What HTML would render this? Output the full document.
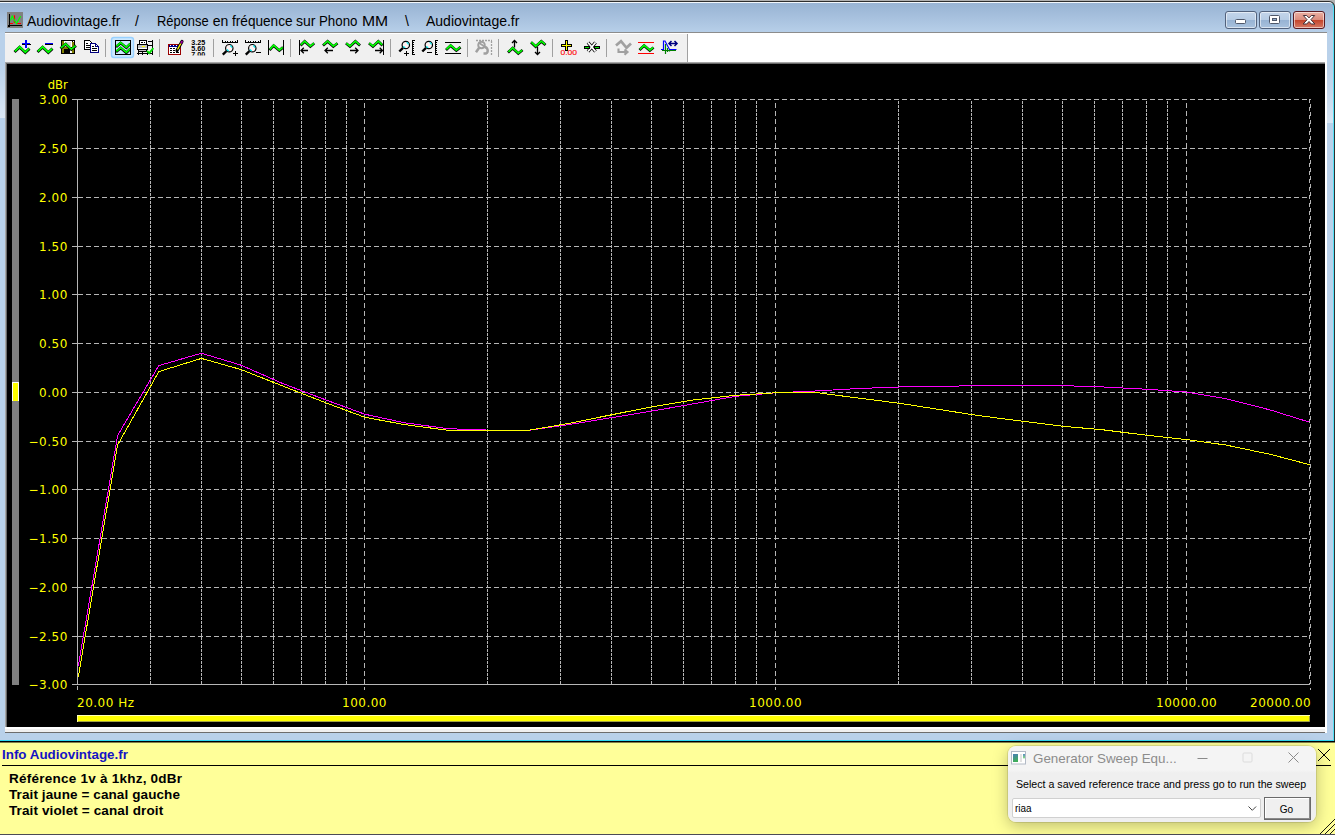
<!DOCTYPE html>
<html><head><meta charset="utf-8"><title>Audiovintage.fr</title>
<style>
html,body{margin:0;padding:0}
body{width:1335px;height:835px;overflow:hidden;position:relative;background:#fff;font-family:"Liberation Sans",sans-serif}
div,span,svg,i{position:absolute;box-sizing:border-box}
#frameout{left:0;top:0;width:1335px;height:742px;background:#b2b2b2}
#framedk{left:-8px;top:1px;width:1343px;height:741px;background:#2e2e2e;border-radius:6px 6px 0 0}
#frame{left:-8px;top:2px;width:1342px;height:739px;background:linear-gradient(#9ab5d5 0,#9cb7d6 4px,#adc6e2 20px,#b9d1ea 31px,#b9d1ea 100%);border-top:1px solid #f2f7fc;border-right:1px solid #52e0f6;border-bottom:1px solid #2fd8f2;border-radius:5px 5px 0 0}
#gl1{left:0;top:62px;width:5px;height:56px;background:linear-gradient(rgba(255,255,255,0) 0,rgba(255,255,255,.18) 40%,rgba(255,255,255,.5) 100%)}
#gl2{left:1327px;top:66px;width:6px;height:57px;background:linear-gradient(rgba(255,255,255,0) 0,rgba(255,255,255,.15) 40%,rgba(255,255,255,.45) 100%)}
#cap{left:0;top:0;width:1335px;height:32px}
#appicon{left:7px;top:12px}
.t{top:11px;font-size:14px;line-height:20px;color:#000;white-space:pre}
.cb{top:11px;width:32px;height:18px;border:1px solid #52627c;border-radius:3px;background:linear-gradient(#c3d5ea 0,#b7cce4 48%,#97b3d3 52%,#a9c2de 100%);box-shadow:inset 0 0 0 1px rgba(255,255,255,.55)}
.cb.red{border-color:#5a1a22;background:linear-gradient(#eab0a4 0,#dc8c7c 48%,#c4452c 52%,#d67a66 100%)}
.cb svg{left:0;top:0}
#client{left:5px;top:32px;width:1322px;height:701px;background:#fff;border-top:1px solid #8c8c8c}
#toolbar{left:5px;top:34px}
#e1{left:5px;top:62px;width:1320px;height:665px;background:#a6a6a6}
#e2{left:6px;top:63px;width:1319px;height:664px;background:#696969}
#strip{left:5px;top:727px;width:1320px;height:6px;background:#f0f0f0;border-top:2px solid #fff;border-bottom:1px solid #6d6d6d}
#plotbox{left:7px;top:64px;width:1318px;height:663px;background:#000;overflow:hidden}
.plot{left:0;top:0}
.yl,.xl{font-family:"DejaVu Sans","Liberation Sans",sans-serif;font-size:12px;line-height:14px;color:#ffff00;white-space:pre;letter-spacing:.5px}
.yl{left:0;width:60.800px;text-align:right;transform:translateY(-64px)}
.xl{top:632px;margin-left:-7px}
#info{left:0;top:741px;width:1335px;height:94px;background:#ffff99;border-top:1px solid #000;border-bottom:1px solid #4c4c55}
#info:before{content:"";position:absolute;left:0;top:0;width:1335px;height:1px;background:rgba(0,0,0,.5)}
.ih{left:2px;top:4.500px;font-weight:bold;font-size:13.400px;line-height:16px;color:#1414c4;white-space:pre}
.iline{left:2px;top:23px;width:1329px;height:1px;background:#000}
.it{left:9px;font-weight:bold;font-size:13.500px;line-height:16px;color:#000;white-space:pre;letter-spacing:.16px}
.ix{left:1317px;top:6px}
.iline2{left:1316px;top:23px;width:19px;height:1px;background:#000}
.grip{left:1315px;top:815px}
#dlg{left:1008px;top:746px;width:308px;height:76px;background:linear-gradient(#f4f4f4 0,#f4f4f4 24px,#efefef 27px,#efefef 100%);border-radius:8px;box-shadow:0 0 0 1px rgba(0,0,0,.10),0 4px 16px rgba(0,0,0,.26)}
.dicon{left:3px;top:5px}
.dt{left:25px;top:3px;font-size:13.400px;line-height:20px;color:#8c8c8c;white-space:pre}
.dbtn{top:6px}
.dmsg{left:8.300px;top:30.500px;font-size:11.600px;line-height:14px;color:#000;white-space:pre;transform:scaleX(.917);transform-origin:0 0}
.combo{left:4px;top:52px;width:249px;height:20px;background:#fff;border:1px solid #d0d0d0;border-radius:2px}
.combo span{left:1.700px;top:1.700px;font-size:11.800px;line-height:14px;color:#000;transform:scaleX(.84);transform-origin:0 0}
.combo svg{left:235px;top:7px}
.go{left:256px;top:51px;width:47px;height:23px;background:#f0f0f0;border:1px solid #6a6a6a;box-shadow:inset -1px -1px 0 #8a8a8a,inset 1px 1px 0 #fff;color:#000}
.go span{left:-1px;width:45px;top:3px;text-align:center;font-size:11.700px;line-height:16px;transform:scaleX(.86)}

</style></head>
<body>
<div id="frameout"></div><div id="framedk"></div><div id="frame"></div>
<div id="gl1"></div><div id="gl2"></div>
<div id="cap">
 <svg id="appicon" width="16" height="16" viewBox="0 0 16 16">
  <rect width="16" height="16" fill="#808080"/>
  <path d="M2.500 2v13M1 13.500h14M1 13l1.500 2" stroke="#000" fill="none" shape-rendering="crispEdges"/>
  <path d="M3 11.500h3M10 11.500h4" stroke="#f00" fill="none" shape-rendering="crispEdges"/>
  <path d="M7.400 3.300v7.500" stroke="#f00" stroke-width="1.300" fill="none"/>
  <path d="M3.300 8.600l1.900-4.300 2.200 3.800 2.100 3.400 4.100-7.200" stroke="#0f0" stroke-width="1.300" fill="none"/>
 </svg>
 <span class="t" style="left:27px">Audiovintage.fr</span>
 <span class="t" style="left:135px">/</span>
 <span class="t" style="left:156.800px;transform:scaleX(.922);transform-origin:0 0">Réponse</span><span class="t" style="left:212.800px">en</span><span class="t" style="left:231.600px;transform:scaleX(.972);transform-origin:0 0">fréquence</span><span class="t" style="left:296px">sur</span><span class="t" style="left:318.700px;transform:scaleX(.95);transform-origin:0 0">Phono</span><span class="t" style="left:362.200px;transform:scaleX(1.120);transform-origin:0 0">MM</span>
 <span class="t" style="left:405px">\</span>
 <span class="t" style="left:426px">Audiovintage.fr</span>
 <div class="cb" style="left:1225px"><svg width="30" height="16" viewBox="0 0 30 16"><rect x="9.500" y="7.500" width="10" height="4" rx="1" fill="#fff" stroke="#4f586a"/></svg></div>
 <div class="cb" style="left:1259px"><svg width="30" height="16" viewBox="0 0 30 16"><rect x="9.500" y="3.500" width="10" height="8" rx="1" fill="#fff" stroke="#4f586a"/><rect x="12.500" y="6.500" width="4" height="2" fill="#8ea8c8" stroke="#4f586a"/></svg></div>
 <div class="cb red" style="left:1293px"><svg width="30" height="16" viewBox="0 0 30 16"><path d="M9.300 3.500h3.400l2.300 2.400 2.300-2.400h3.400l-3.800 4.200 4 4.300h-3.600l-2.300-2.500-2.300 2.500h-3.600l4-4.300z" fill="#fff" stroke="#45323a" stroke-width="1"/></svg></div>
</div>
<div id="client"></div>
<svg id="toolbar" width="683" height="28" viewBox="5 34 683 28">
<rect x="5" y="34" width="683" height="28" fill="#f0f0f0"/><rect x="687" y="34" width="1" height="28" fill="#a0a0a0" shape-rendering="crispEdges"/>
<polyline points="14.52,51.99 19.62,47.15 25.32,52.55 29.48,48.61" fill="none" stroke="#000" stroke-width="2.8" stroke-linejoin="miter"/><polyline points="14.88,51.3 19.62,46.8 25.32,52.2 29.12,48.6" fill="none" stroke="#00ff00" stroke-width="1.8" stroke-linejoin="miter"/>
<path d="M22 44.500h8.500M26.500 40v8.300" stroke="#000" stroke-width="1.600" fill="none" shape-rendering="crispEdges"/>
<path d="M22 43.500h8M26 40v8" stroke="#0000ff" stroke-width="1.600" fill="none" shape-rendering="crispEdges"/>
<polyline points="37.52,51.99 42.62,47.15 48.33,52.55 52.48,48.61" fill="none" stroke="#000" stroke-width="2.8" stroke-linejoin="miter"/><polyline points="37.88,51.3 42.62,46.8 48.33,52.2 52.12,48.6" fill="none" stroke="#00ff00" stroke-width="1.8" stroke-linejoin="miter"/>
<rect x="45" y="43" width="8.300" height="2" fill="#000" shape-rendering="crispEdges"/><rect x="45" y="42.600" width="8" height="1.300" fill="#0000ff" shape-rendering="crispEdges"/>
<g shape-rendering="crispEdges"><rect x="61" y="40" width="14" height="14" fill="#000"/><rect x="62" y="41" width="2" height="12" fill="#808000"/><rect x="72" y="42" width="2" height="11" fill="#808000"/><rect x="64" y="41" width="8" height="6" fill="#fff"/><rect x="66" y="42" width="5" height="4" fill="#d8d8d8"/><rect x="73" y="41" width="1" height="1" fill="#fff"/><rect x="62" y="47" width="6" height="2" fill="#808000"/><rect x="70" y="50" width="2" height="3" fill="#fff"/></g>
<polyline points="60.51,48.52 65.64,44.15 71.34,49.55 75.99,45.63" fill="none" stroke="#000" stroke-width="2.7" stroke-linejoin="miter"/><polyline points="60.89,47.85 65.64,43.8 71.34,49.2 75.61,45.6" fill="none" stroke="#00ff00" stroke-width="1.7" stroke-linejoin="miter"/>
<g shape-rendering="crispEdges"><path d="M84.500 40.500h5l2 2v7h-7z" fill="#fff" stroke="#000"/><path d="M86 43.500h2M86 45.500h4M86 47.500h4" stroke="#000"/><path d="M90.500 43.500h5l3 3v6h-8z" fill="#fff" stroke="#000080"/><path d="M95.500 43.500v3h3" fill="none" stroke="#000080"/><path d="M92 46.500h2M92 48.500h5M92 50.500h5" stroke="#000"/></g>
<rect x="105" y="39" width="1" height="18" fill="#a0a0a0" shape-rendering="crispEdges"/>
<rect x="111.500" y="37.500" width="22" height="20" rx="2.500" fill="#cce8ff" stroke="#99d1ff" stroke-width="1.400"/>
<rect x="115.500" y="40.500" width="15" height="14" fill="none" stroke="#000" shape-rendering="crispEdges"/>
<svg x="116" y="41" width="14" height="13" viewBox="116 41 14 13"><polyline points="115.99,47.03 120.64,42.92 126.34,47.78 130.49,43.65" fill="none" stroke="#000" stroke-width="2.7" stroke-linejoin="miter"/><polyline points="116.36,46.35 120.64,42.57 126.34,47.43 130.14,43.65" fill="none" stroke="#00ff00" stroke-width="1.7" stroke-linejoin="miter"/><polyline points="115.99,52.03 120.64,47.92 126.34,52.78 130.49,48.65" fill="none" stroke="#000" stroke-width="2.7" stroke-linejoin="miter"/><polyline points="116.36,51.35 120.64,47.57 126.34,52.43 130.14,48.65" fill="none" stroke="#00ff00" stroke-width="1.7" stroke-linejoin="miter"/></svg>
<g shape-rendering="crispEdges"><path d="M139.500 44v-3.500h7v3.500" fill="#fff" stroke="#000"/><rect x="141" y="42" width="2" height="1" fill="#000"/><rect x="144" y="42" width="1" height="1" fill="#000"/><rect x="137.500" y="44.500" width="10" height="5" fill="#c0c0c0" stroke="#000"/><rect x="142" y="46" width="3" height="1" fill="#ffff00"/><rect x="138" y="48" width="9" height="1" fill="#fff"/><rect x="138.500" y="49.500" width="8" height="1.500" fill="#c0c0c0" stroke="#000"/><path d="M152.500 40v15M148 41.500h5M148 45.500h5M137 53.500h16M138.500 51v4M142.500 51v4M147.500 51v4" stroke="#000" fill="none"/></g>
<path d="M147 51l2.300 2.200 4-5" stroke="#00e000" stroke-width="1.900" fill="none"/>
<rect x="159" y="39" width="1" height="18" fill="#a0a0a0" shape-rendering="crispEdges"/>
<g shape-rendering="crispEdges"><rect x="168.500" y="44.500" width="12" height="10" fill="#fff" stroke="#990000"/><rect x="169" y="45" width="11" height="2" fill="#000090"/><rect x="170" y="45" width="1" height="1" fill="#fff"/><rect x="173" y="45" width="1" height="1" fill="#fff"/><rect x="176" y="45" width="1" height="1" fill="#fff"/><path d="M170 48.500h2M173 48.500h2M170 50.500h2M173 50.500h2M176 50.500h2M170 52.500h2M173 52.500h2M176 52.500h3" stroke="#000"/></g>
<path d="M177 50.500L182 41.500" stroke="#000" stroke-width="3.200" stroke-linecap="round" fill="none"/><path d="M177.500 49.500L180.800 43.500" stroke="#ffff00" stroke-width="1.300" fill="none"/><path d="M181.300 42.800L182 41.500" stroke="#a000a0" stroke-width="1.800" stroke-linecap="round" fill="none"/>
<svg x="190" y="39" width="17" height="16.500" viewBox="190 39 17 16.500"><g font-family="Liberation Sans, sans-serif" font-weight="bold" font-size="6.800" fill="#000"><text x="191.300" y="44.800" textLength="14" lengthAdjust="spacingAndGlyphs">3.25</text><text x="191.300" y="50.800" textLength="14" lengthAdjust="spacingAndGlyphs">5.60</text><text x="191.300" y="56.800" textLength="14" lengthAdjust="spacingAndGlyphs">7.00</text></g></svg>
<rect x="213" y="39" width="1" height="18" fill="#a0a0a0" shape-rendering="crispEdges"/>
<path d="M222 42.500h16" stroke="#000" fill="none" shape-rendering="crispEdges"/><path d="M222.5 40.0v2.5" stroke="#000" fill="none" shape-rendering="crispEdges"/><path d="M225 41.0v1.5" stroke="#000" fill="none" shape-rendering="crispEdges"/><path d="M227.5 41.0v1.5" stroke="#000" fill="none" shape-rendering="crispEdges"/><path d="M230 41.0v1.5" stroke="#000" fill="none" shape-rendering="crispEdges"/><path d="M232.5 41.0v1.5" stroke="#000" fill="none" shape-rendering="crispEdges"/><path d="M235 41.0v1.5" stroke="#000" fill="none" shape-rendering="crispEdges"/><path d="M237.5 40.0v2.5" stroke="#000" fill="none" shape-rendering="crispEdges"/>
<path d="M226.5 51.0L222.8 54.7" stroke="#000" stroke-width="2.400" fill="none"/><circle cx="229.3" cy="48.2" r="3.700" fill="#fff3f3" stroke="#000" stroke-width="1.200"/><path d="M226.9 49.400000000000006A2.700 2.700 0 0 0 228.8 50.900000000000006M230.10000000000002 45.6A2.700 2.700 0 0 1 231.9 47.7" stroke="#00e8f0" stroke-width="1.300" fill="none"/>
<path d="M233 53.500h5M235.500 51v5" stroke="#000" fill="none" shape-rendering="crispEdges"/>
<path d="M245 42.500h16" stroke="#000" fill="none" shape-rendering="crispEdges"/><path d="M245.5 40.0v2.5" stroke="#000" fill="none" shape-rendering="crispEdges"/><path d="M248 41.0v1.5" stroke="#000" fill="none" shape-rendering="crispEdges"/><path d="M250.5 41.0v1.5" stroke="#000" fill="none" shape-rendering="crispEdges"/><path d="M253 41.0v1.5" stroke="#000" fill="none" shape-rendering="crispEdges"/><path d="M255.5 41.0v1.5" stroke="#000" fill="none" shape-rendering="crispEdges"/><path d="M258 41.0v1.5" stroke="#000" fill="none" shape-rendering="crispEdges"/><path d="M260.5 40.0v2.5" stroke="#000" fill="none" shape-rendering="crispEdges"/>
<path d="M249.5 51.0L245.8 54.7" stroke="#000" stroke-width="2.400" fill="none"/><circle cx="252.3" cy="48.2" r="3.700" fill="#fff3f3" stroke="#000" stroke-width="1.200"/><path d="M249.9 49.400000000000006A2.700 2.700 0 0 0 251.8 50.900000000000006M253.10000000000002 45.6A2.700 2.700 0 0 1 254.9 47.7" stroke="#00e8f0" stroke-width="1.300" fill="none"/>
<path d="M256 52.500h5" stroke="#000" fill="none" shape-rendering="crispEdges"/>
<polyline points="269.5,50.05 273.64,45.62 279.34,50.58 283.04,47.36" fill="none" stroke="#000" stroke-width="2.7" stroke-linejoin="miter"/><polyline points="269.84,49.33 273.64,45.27 279.34,50.23 282.66,47.34" fill="none" stroke="#00ff00" stroke-width="1.7" stroke-linejoin="miter"/>
<path d="M268.500 40v15M283.500 40v15" stroke="#000" fill="none" shape-rendering="crispEdges"/>
<rect x="290" y="39" width="1" height="18" fill="#a0a0a0" shape-rendering="crispEdges"/>
<polyline points="300.49,45.57 304.64,41.43 310.34,46.57 314.24,43.28" fill="none" stroke="#000" stroke-width="2.7" stroke-linejoin="miter"/><polyline points="300.84,44.87 304.64,41.08 310.34,46.22 313.86,43.25" fill="none" stroke="#00ff00" stroke-width="1.7" stroke-linejoin="miter"/>
<path d="M299.500 40v15" stroke="#000" fill="none" shape-rendering="crispEdges"/>
<path d="M301 50.5H308M303.8 47.7L301 50.5L303.8 53.3" stroke="#000" stroke-width="1.300" fill="none"/>
<polyline points="322.99,45.55 327.64,41.43 333.34,46.57 337.53,43.29" fill="none" stroke="#000" stroke-width="2.7" stroke-linejoin="miter"/><polyline points="323.36,44.87 327.64,41.08 333.34,46.22 337.14,43.25" fill="none" stroke="#00ff00" stroke-width="1.7" stroke-linejoin="miter"/>
<path d="M325 50.5H333M327.8 47.7L325 50.5L327.8 53.3" stroke="#000" stroke-width="1.300" fill="none"/>
<polyline points="345.96,43.28 349.96,46.57 355.38,41.43 360.02,45.55" fill="none" stroke="#000" stroke-width="2.7" stroke-linejoin="miter"/><polyline points="346.35,43.25 349.96,46.22 355.38,41.08 359.65,44.87" fill="none" stroke="#00ff00" stroke-width="1.7" stroke-linejoin="miter"/>
<path d="M350 50.5H358M355.2 47.7L358 50.5L355.2 53.3" stroke="#000" stroke-width="1.300" fill="none"/>
<polyline points="368.95,43.28 372.95,46.57 378.36,41.43 382.51,45.57" fill="none" stroke="#000" stroke-width="2.7" stroke-linejoin="miter"/><polyline points="369.34,43.25 372.95,46.22 378.36,41.08 382.16,44.87" fill="none" stroke="#00ff00" stroke-width="1.7" stroke-linejoin="miter"/>
<path d="M383.500 40v15" stroke="#000" fill="none" shape-rendering="crispEdges"/>
<path d="M375 50.5H382.5M379.7 47.7L382.5 50.5L379.7 53.3" stroke="#000" stroke-width="1.300" fill="none"/>
<rect x="390" y="39" width="1" height="18" fill="#a0a0a0" shape-rendering="crispEdges"/>
<path d="M403.0 47.8L399.3 51.5" stroke="#000" stroke-width="2.400" fill="none"/><circle cx="405.8" cy="45" r="3.700" fill="#fff3f3" stroke="#000" stroke-width="1.200"/><path d="M403.40000000000003 46.2A2.700 2.700 0 0 0 405.3 47.7M406.6 42.4A2.700 2.700 0 0 1 408.40000000000003 44.5" stroke="#00e8f0" stroke-width="1.300" fill="none"/>
<path d="M404 53.500h5M406.500 51v5" stroke="#000" fill="none" shape-rendering="crispEdges"/>
<path d="M412.5 40v15" stroke="#000" fill="none" shape-rendering="crispEdges"/><path d="M412 40.500h3M412 54.500h3" stroke="#000" fill="none" shape-rendering="crispEdges"/><path d="M413 42.5h1" stroke="#000" fill="none" shape-rendering="crispEdges"/><path d="M413 44.5h1" stroke="#000" fill="none" shape-rendering="crispEdges"/><path d="M413 46.5h1" stroke="#000" fill="none" shape-rendering="crispEdges"/><path d="M413 48.5h1" stroke="#000" fill="none" shape-rendering="crispEdges"/><path d="M413 50.5h1" stroke="#000" fill="none" shape-rendering="crispEdges"/><path d="M413 52.5h1" stroke="#000" fill="none" shape-rendering="crispEdges"/>
<path d="M426.0 47.8L422.3 51.5" stroke="#000" stroke-width="2.400" fill="none"/><circle cx="428.8" cy="45" r="3.700" fill="#fff3f3" stroke="#000" stroke-width="1.200"/><path d="M426.40000000000003 46.2A2.700 2.700 0 0 0 428.3 47.7M429.6 42.4A2.700 2.700 0 0 1 431.40000000000003 44.5" stroke="#00e8f0" stroke-width="1.300" fill="none"/>
<path d="M427 52.500h5" stroke="#000" fill="none" shape-rendering="crispEdges"/>
<path d="M435.5 40v15" stroke="#000" fill="none" shape-rendering="crispEdges"/><path d="M435 40.500h3M435 54.500h3" stroke="#000" fill="none" shape-rendering="crispEdges"/><path d="M436 42.5h1" stroke="#000" fill="none" shape-rendering="crispEdges"/><path d="M436 44.5h1" stroke="#000" fill="none" shape-rendering="crispEdges"/><path d="M436 46.5h1" stroke="#000" fill="none" shape-rendering="crispEdges"/><path d="M436 48.5h1" stroke="#000" fill="none" shape-rendering="crispEdges"/><path d="M436 50.5h1" stroke="#000" fill="none" shape-rendering="crispEdges"/><path d="M436 52.5h1" stroke="#000" fill="none" shape-rendering="crispEdges"/>
<path d="M445 42.500h16M445 53.500h16" stroke="#000" fill="none" shape-rendering="crispEdges"/>
<polyline points="446.0,50.02 450.64,45.62 456.34,50.58 460.52,47.11" fill="none" stroke="#000" stroke-width="2.7" stroke-linejoin="miter"/><polyline points="446.36,49.33 450.64,45.27 456.34,50.23 460.14,47.08" fill="none" stroke="#00ff00" stroke-width="1.7" stroke-linejoin="miter"/>
<rect x="467" y="39" width="1" height="18" fill="#a0a0a0" shape-rendering="crispEdges"/>
<path d="M476 40.500h16" stroke="#a0a0a0" stroke-width="1.300" stroke-dasharray="2 1" fill="none"/><path d="M491.500 41v14" stroke="#a0a0a0" stroke-width="1.300" stroke-dasharray="2 1" fill="none"/>
<circle cx="481.500" cy="45" r="3.300" fill="none" stroke="#a0a0a0" stroke-width="1.900"/><path d="M479.300 47.500l-3.300 4.800" stroke="#a0a0a0" stroke-width="2.500" fill="none"/><path d="M478.500 42.500l8 5.500" stroke="#a0a0a0" stroke-width="1.600" fill="none"/><path d="M484.500 47a3.500 3.500 0 0 1 1.500 6.500h-2.500" stroke="#a0a0a0" stroke-width="2.400" fill="none"/>
<rect x="498" y="39" width="1" height="18" fill="#a0a0a0" shape-rendering="crispEdges"/>
<path d="M514.500 40.500v7M512 43l2.500-2.500 2.500 2.500" stroke="#000" stroke-width="1.300" fill="none"/>
<polyline points="508.0,52.54 512.64,48.15 518.34,53.55 522.52,50.08" fill="none" stroke="#000" stroke-width="2.7" stroke-linejoin="miter"/><polyline points="508.36,51.85 512.64,47.8 518.34,53.2 522.14,50.05" fill="none" stroke="#00ff00" stroke-width="1.7" stroke-linejoin="miter"/>
<path d="M537.500 47v7.500M535 52l2.500 2.500 2.500-2.500" stroke="#000" stroke-width="1.300" fill="none"/>
<polyline points="531.0,42.17 535.64,46.57 541.34,41.43 545.52,45.09" fill="none" stroke="#000" stroke-width="2.7" stroke-linejoin="miter"/><polyline points="531.36,42.16 535.64,46.22 541.34,41.08 545.14,44.41" fill="none" stroke="#00ff00" stroke-width="1.7" stroke-linejoin="miter"/>
<rect x="552" y="39" width="1" height="18" fill="#a0a0a0" shape-rendering="crispEdges"/>
<path d="M561 45.500h11M566.500 40v10.500" stroke="#000" stroke-width="3" fill="none" shape-rendering="crispEdges"/><path d="M562 45.500h9M566.500 41v8.500" stroke="#ffff00" stroke-width="1" fill="none" shape-rendering="crispEdges"/>
<text x="560.500" y="54.800" font-family="Liberation Sans, sans-serif" font-size="8" fill="#ff0000" stroke="#ff0000" stroke-width="0.120" textLength="16.500" lengthAdjust="spacingAndGlyphs">0.00</text>
<path d="M588 42.500l7.500 9M595.500 42.500l-7.500 9" stroke="#000" stroke-width="3.400" fill="none"/><path d="M588 42.500l7.500 9M595.500 42.500l-7.500 9" stroke="#fff" stroke-width="1.900" fill="none"/>
<path d="M584 47.500h5.500M594 47.500h5.500" stroke="#000" stroke-width="3" fill="none" shape-rendering="crispEdges"/><path d="M585 47.500h4M594.500 47.500h4" stroke="#00e000" stroke-width="1" fill="none" shape-rendering="crispEdges"/>
<rect x="606" y="39" width="1" height="18" fill="#a0a0a0" shape-rendering="crispEdges"/>
<path d="M616 45.500l5-4.300 5.500 6.600 4.500-4.300" stroke="#a0a0a0" stroke-width="2.700" fill="none"/><path d="M618.500 48.500v3.500h8.500M624.500 49.500l3 2.500-3 2.800" stroke="#a0a0a0" stroke-width="2.100" fill="none"/>
<path d="M638 42.500h16M638 53.500h16" stroke="#ff0000" fill="none" shape-rendering="crispEdges"/>
<polyline points="639.49,50.02 644.12,45.62 649.83,50.58 653.54,47.55" fill="none" stroke="#000" stroke-width="2.7" stroke-linejoin="miter"/><polyline points="639.85,49.33 644.12,45.27 649.83,50.23 653.15,47.52" fill="none" stroke="#00ff00" stroke-width="1.7" stroke-linejoin="miter"/>
<path d="M662 50.500h14" stroke="#008000" stroke-width="1.200" fill="none" shape-rendering="crispEdges"/><path d="M665.500 44v10M667.500 48v4M669.500 49.500v2" stroke="#008000" stroke-width="1.200" fill="none"/>
<path d="M661 49.500h2.500v-8.500h1.500l4.500 8.500h7" stroke="#0000ff" stroke-width="1.200" fill="none"/>
<path d="M669.500 43.500h7M671.500 41l-2.500 2.500 2.500 2.500M674.500 41l2.500 2.500-2.500 2.500" stroke="#000080" stroke-width="1.500" fill="none"/>
</svg>
<div id="e1"></div><div id="e2"></div><div id="strip"></div>
<div id="plotbox">
<svg class="plot" width="1318" height="663" viewBox="7 64 1318 663" shape-rendering="crispEdges">
<line x1="72" x2="78" y1="99.5" y2="99.5" stroke="#b6b6b6"/>
<line x1="78" x2="1310" y1="99.5" y2="99.5" stroke="#b6b6b6" stroke-dasharray="5 3"/>
<line x1="72" x2="78" y1="148.5" y2="148.5" stroke="#b6b6b6"/>
<line x1="78" x2="1310" y1="148.5" y2="148.5" stroke="#b6b6b6" stroke-dasharray="5 3"/>
<line x1="72" x2="78" y1="197.5" y2="197.5" stroke="#b6b6b6"/>
<line x1="78" x2="1310" y1="197.5" y2="197.5" stroke="#b6b6b6" stroke-dasharray="5 3"/>
<line x1="72" x2="78" y1="246.5" y2="246.5" stroke="#b6b6b6"/>
<line x1="78" x2="1310" y1="246.5" y2="246.5" stroke="#b6b6b6" stroke-dasharray="5 3"/>
<line x1="72" x2="78" y1="294.5" y2="294.5" stroke="#b6b6b6"/>
<line x1="78" x2="1310" y1="294.5" y2="294.5" stroke="#b6b6b6" stroke-dasharray="5 3"/>
<line x1="72" x2="78" y1="343.5" y2="343.5" stroke="#b6b6b6"/>
<line x1="78" x2="1310" y1="343.5" y2="343.5" stroke="#b6b6b6" stroke-dasharray="5 3"/>
<line x1="72" x2="78" y1="392.5" y2="392.5" stroke="#b6b6b6"/>
<line x1="78" x2="1310" y1="392.5" y2="392.5" stroke="#b6b6b6" stroke-dasharray="5 3"/>
<line x1="72" x2="78" y1="441.5" y2="441.5" stroke="#b6b6b6"/>
<line x1="78" x2="1310" y1="441.5" y2="441.5" stroke="#b6b6b6" stroke-dasharray="5 3"/>
<line x1="72" x2="78" y1="489.5" y2="489.5" stroke="#b6b6b6"/>
<line x1="78" x2="1310" y1="489.5" y2="489.5" stroke="#b6b6b6" stroke-dasharray="5 3"/>
<line x1="72" x2="78" y1="538.5" y2="538.5" stroke="#b6b6b6"/>
<line x1="78" x2="1310" y1="538.5" y2="538.5" stroke="#b6b6b6" stroke-dasharray="5 3"/>
<line x1="72" x2="78" y1="587.5" y2="587.5" stroke="#b6b6b6"/>
<line x1="78" x2="1310" y1="587.5" y2="587.5" stroke="#b6b6b6" stroke-dasharray="5 3"/>
<line x1="72" x2="78" y1="636.5" y2="636.5" stroke="#b6b6b6"/>
<line x1="78" x2="1310" y1="636.5" y2="636.5" stroke="#b6b6b6" stroke-dasharray="5 3"/>
<line x1="150.5" x2="150.5" y1="101" y2="684" stroke="#b6b6b6" stroke-dasharray="3 1"/>
<line x1="201.5" x2="201.5" y1="101" y2="684" stroke="#b6b6b6" stroke-dasharray="3 1"/>
<line x1="241.5" x2="241.5" y1="101" y2="684" stroke="#b6b6b6" stroke-dasharray="3 1"/>
<line x1="273.5" x2="273.5" y1="101" y2="684" stroke="#b6b6b6" stroke-dasharray="3 1"/>
<line x1="301.5" x2="301.5" y1="101" y2="684" stroke="#b6b6b6" stroke-dasharray="3 1"/>
<line x1="325.5" x2="325.5" y1="101" y2="684" stroke="#b6b6b6" stroke-dasharray="3 1"/>
<line x1="346.5" x2="346.5" y1="101" y2="684" stroke="#b6b6b6" stroke-dasharray="3 1"/>
<line x1="487.5" x2="487.5" y1="101" y2="684" stroke="#b6b6b6" stroke-dasharray="3 1"/>
<line x1="560.5" x2="560.5" y1="101" y2="684" stroke="#b6b6b6" stroke-dasharray="3 1"/>
<line x1="611.5" x2="611.5" y1="101" y2="684" stroke="#b6b6b6" stroke-dasharray="3 1"/>
<line x1="651.5" x2="651.5" y1="101" y2="684" stroke="#b6b6b6" stroke-dasharray="3 1"/>
<line x1="683.5" x2="683.5" y1="101" y2="684" stroke="#b6b6b6" stroke-dasharray="3 1"/>
<line x1="711.5" x2="711.5" y1="101" y2="684" stroke="#b6b6b6" stroke-dasharray="3 1"/>
<line x1="735.5" x2="735.5" y1="101" y2="684" stroke="#b6b6b6" stroke-dasharray="3 1"/>
<line x1="756.5" x2="756.5" y1="101" y2="684" stroke="#b6b6b6" stroke-dasharray="3 1"/>
<line x1="898.5" x2="898.5" y1="101" y2="684" stroke="#b6b6b6" stroke-dasharray="3 1"/>
<line x1="971.5" x2="971.5" y1="101" y2="684" stroke="#b6b6b6" stroke-dasharray="3 1"/>
<line x1="1022.5" x2="1022.5" y1="101" y2="684" stroke="#b6b6b6" stroke-dasharray="3 1"/>
<line x1="1062.5" x2="1062.5" y1="101" y2="684" stroke="#b6b6b6" stroke-dasharray="3 1"/>
<line x1="1094.5" x2="1094.5" y1="101" y2="684" stroke="#b6b6b6" stroke-dasharray="3 1"/>
<line x1="1122.5" x2="1122.5" y1="101" y2="684" stroke="#b6b6b6" stroke-dasharray="3 1"/>
<line x1="1146.5" x2="1146.5" y1="101" y2="684" stroke="#b6b6b6" stroke-dasharray="3 1"/>
<line x1="1167.5" x2="1167.5" y1="101" y2="684" stroke="#b6b6b6" stroke-dasharray="3 1"/>
<line x1="364.5" x2="364.5" y1="99" y2="690" stroke="#b6b6b6" stroke-dasharray="5 3" stroke-dashoffset="4"/>
<line x1="775.5" x2="775.5" y1="99" y2="690" stroke="#b6b6b6" stroke-dasharray="5 3" stroke-dashoffset="4"/>
<line x1="1186.5" x2="1186.5" y1="99" y2="690" stroke="#b6b6b6" stroke-dasharray="5 3" stroke-dashoffset="4"/>
<line x1="1309.5" x2="1309.5" y1="99" y2="684" stroke="#b6b6b6" stroke-dasharray="4 4"/>
<line x1="1310.5" x2="1310.5" y1="99" y2="690" stroke="#b6b6b6" stroke-dasharray="4 4" stroke-dashoffset="3"/>
<line x1="77.5" x2="77.5" y1="99" y2="685" stroke="#b6b6b6"/>
<line x1="77.5" x2="77.5" y1="686" y2="690" stroke="#b6b6b6"/>
<line x1="72" x2="1310" y1="684.5" y2="684.5" stroke="#b6b6b6"/>
<polyline fill="none" stroke="#ff00ff" points="78.3,666.0 117.6,435.5 158.8,365.6 201.4,353.2 241.2,365.2 282.4,383.4 325.0,399.6 364.8,414.2 404.6,422.8 448.6,428.7 488.4,430.1 528.2,430.4 569.4,424.5 612.0,417.6 651.8,411.1 693.0,403.9 735.6,396.3 775.4,392.8 815.1,391.0 859.2,388.5 899.0,387.0 938.7,386.4 980.0,385.6 1022.6,385.4 1062.3,385.6 1103.6,387.0 1146.1,389.2 1185.9,392.0 1225.7,398.6 1269.7,409.8 1309.5,422.2"/>
<polyline fill="none" stroke="#ffff00" points="78.3,677.0 117.6,445.0 158.8,371.6 201.4,358.4 241.2,369.6 282.4,385.9 325.0,402.5 364.8,417.3 404.6,424.6 448.6,430.4 488.4,430.4 528.2,430.4 569.4,423.3 612.0,414.7 651.8,406.8 693.0,400.0 735.6,395.3 775.4,392.8 815.1,392.4 859.2,398.2 899.0,403.2 938.7,409.4 980.0,415.8 1022.6,421.2 1062.3,426.2 1103.6,429.9 1146.1,435.2 1185.9,439.5 1225.7,445.0 1269.7,454.2 1309.5,464.6"/>
<rect x="12" y="99" width="7" height="586" fill="#808080"/>
<rect x="12" y="382" width="7" height="19" fill="#ffffff"/>
<rect x="13" y="383" width="5" height="18" fill="#ffff00"/>
<rect x="77" y="715" width="1233" height="7" fill="#ffff00"/>
<rect x="77" y="715" width="1233" height="1" fill="#fffff0" opacity=".75"/>
<rect x="77" y="715" width="1" height="7" fill="#fffff0" opacity=".6"/>
<rect x="78" y="721" width="1232" height="1" fill="#707070" opacity=".65"/>
<rect x="1309" y="716" width="1" height="6" fill="#707070" opacity=".65"/>
</svg>
<div class="yl" style="top:78px;letter-spacing:0;font-size:11.600px">dBr</div>
<div class="yl" style="top:93px">3.00</div><div class="yl" style="top:142px">2.50</div><div class="yl" style="top:191px">2.00</div><div class="yl" style="top:240px">1.50</div><div class="yl" style="top:288px">1.00</div><div class="yl" style="top:337px">0.50</div><div class="yl" style="top:386px">0.00</div><div class="yl" style="top:435px">−0.50</div><div class="yl" style="top:483px">−1.00</div><div class="yl" style="top:532px">−1.50</div><div class="yl" style="top:581px">−2.00</div><div class="yl" style="top:630px">−2.50</div><div class="yl" style="top:678px">−3.00</div>
<div class="xl" style="left:77px">20.00 Hz</div>
<div class="xl" style="left:342px">100.00</div>
<div class="xl" style="left:749px">1000.00</div>
<div class="xl" style="left:1156px">10000.00</div>
<div class="xl" style="left:1250px">20000.00</div>
</div>
<div id="info">
 <div class="ih">Info Audiovintage.fr</div>
 <div class="iline"></div>
 <div class="it" style="top:29px;letter-spacing:.24px">Référence 1v à 1khz, 0dBr</div>
 <div class="it" style="top:45px;letter-spacing:.1px">Trait jaune = canal gauche</div>
 <div class="it" style="top:61px;letter-spacing:.12px">Trait violet = canal droit</div>
 <svg class="ix" width="14" height="14" viewBox="0 0 14 14"><path d="M1 1l12 12M13 1L1 13" stroke="#000" stroke-width="1" fill="none"/></svg>
</div>
<svg class="grip" width="20" height="20" viewBox="0 0 20 20"><path d="M20 4L5 19M20 9L10 19M20 14L15 19" stroke="#000" stroke-width="0.900" fill="none"/></svg>
<div id="dlg">
 <svg class="dicon" width="16" height="14" viewBox="0 0 16 14"><defs><linearGradient id="dg" x1="0" y1="0" x2="0.300" y2="1"><stop offset="0" stop-color="#4a7db8"/><stop offset="1" stop-color="#3fae58"/></linearGradient><linearGradient id="dg2" x1="0" y1="0" x2="0" y2="1"><stop offset="0" stop-color="#5a8cc4"/><stop offset=".7" stop-color="#7fcf8a"/><stop offset="1" stop-color="#ffffff"/></linearGradient></defs><rect x="0.500" y="0.500" width="14" height="12.500" fill="#fff" stroke="#b2bac6"/><rect x="2" y="3" width="5" height="8" fill="url(#dg)"/><rect x="9" y="3" width="2" height="8" fill="#e2e2e2"/><rect x="12" y="3" width="2" height="5" fill="url(#dg2)"/></svg>
 <span class="dt">Generator Sweep Equ...</span>
 <svg class="dbtn" style="left:189px" width="12" height="12" viewBox="0 0 12 12"><path d="M0.500 6.500h10" stroke="#8a8a8a" fill="none"/></svg>
 <svg class="dbtn" style="left:234px" width="12" height="12" viewBox="0 0 12 12"><rect x="1" y="1" width="9" height="9" rx="1" stroke="#dcdcdc" fill="none"/></svg>
 <svg class="dbtn" style="left:280px" width="12" height="12" viewBox="0 0 12 12"><path d="M0.500 0.500l10 10M10.500 0.500l-10 10" stroke="#8a8a8a" fill="none"/></svg>
 <div class="dmsg">Select a saved reference trace and press go to run the sweep</div>
 <div class="combo"><span>riaa</span><svg width="9" height="6" viewBox="0 0 9 6"><path d="M0.500 0.500l3.800 3.800 3.800-3.800" stroke="#444" fill="none"/></svg></div>
 <div class="go"><span>Go</span></div>
</div>
</body></html>
